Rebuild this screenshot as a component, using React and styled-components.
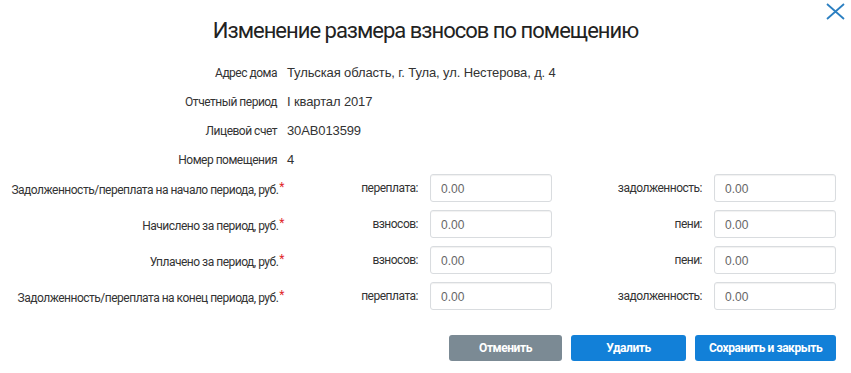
import React from "react";
import styled, { createGlobalStyle } from "styled-components";

const GlobalStyle = createGlobalStyle`
  html, body {
    margin: 0;
    padding: 0;
    background: #ffffff;
  }
  body {
    font-family: Roboto, "Liberation Sans", sans-serif;
    color: #333;
  }
`;

const Dialog = styled.div`
  position: relative;
  width: 851px;
  height: 373px;
  box-sizing: border-box;
  background: #fff;
`;

const CloseButton = styled.button`
  position: absolute;
  top: 1px;
  right: 5px;
  width: 22px;
  height: 20px;
  padding: 0;
  border: none;
  background: transparent;
  cursor: pointer;
  display: flex;
  align-items: center;
  justify-content: center;
`;

const Title = styled.h1`
  margin: 0;
  padding-top: 18px;
  height: 40px;
  font-family: Roboto, "Liberation Sans", sans-serif;
  font-weight: 400;
  font-size: 22px;
  line-height: 26px;
  letter-spacing: -1px;
  text-align: center;
  color: #222;
`;

const InfoGrid = styled.div`
  display: grid;
  grid-template-columns: 277px 1fr;
  column-gap: 10px;
  grid-auto-rows: 29px;
  align-items: center;
`;

const Label = styled.div`
  font-family: Roboto, "Liberation Sans", sans-serif;
  font-size: 12px;
  letter-spacing: -0.5px;
  color: #333;
  text-align: right;
  white-space: nowrap;
`;

const Value = styled.div`
  font-family: "Liberation Sans", Arial, sans-serif;
  font-size: 13px;
  letter-spacing: -0.12px;
  color: #333;
  white-space: nowrap;
`;

const FieldGrid = styled.div`
  display: grid;
  grid-template-columns: 284px 122px 122px 138px 122px;
  column-gap: 12px;
  grid-auto-rows: 28px;
  row-gap: 8px;
  align-items: center;
`;

const Required = styled.span`
  color: #e0262b;
  margin-left: 1px;
  vertical-align: 3px;
  font-size: 12px;
`;

const NumberInput = styled.input`
  box-sizing: border-box;
  width: 122px;
  height: 28px;
  padding: 2px 10px 0;
  border: 1px solid #d9dcdf;
  border-radius: 3px;
  box-shadow: inset 0 1px 1px rgba(0, 0, 0, 0.06);
  font-family: "Liberation Sans", Arial, sans-serif;
  font-size: 12px;
  color: #666;
  background: #fff;
  outline: none;
`;

const Footer = styled.div`
  display: flex;
  justify-content: flex-end;
  gap: 9px;
  padding: 25px 15px 0 0;
`;

const Button = styled.button`
  height: 26px;
  width: ${(p) => p.$width}px;
  border: none;
  border-radius: 3px;
  background: ${(p) => (p.$muted ? "#7b8a94" : "#1280d8")};
  color: #fff;
  font-family: Roboto, "Liberation Sans", sans-serif;
  font-weight: 700;
  font-size: 12px;
  letter-spacing: -0.45px;
  cursor: pointer;
`;

const info = [
  ["Адрес дома", "Тульская область, г. Тула, ул. Нестерова, д. 4"],
  ["Отчетный период", "I квартал 2017"],
  ["Лицевой счет", "30АВ013599"],
  ["Номер помещения", "4"],
];

const fields = [
  ["Задолженность/переплата на начало периода, руб.", "переплата:", "задолженность:"],
  ["Начислено за период, руб.", "взносов:", "пени:"],
  ["Уплачено за период, руб.", "взносов:", "пени:"],
  ["Задолженность/переплата на конец периода, руб.", "переплата:", "задолженность:"],
];

export default function App() {
  return (
    <>
      <GlobalStyle />
      <Dialog>
        <CloseButton aria-label="Закрыть">
          <svg width="19" height="17" viewBox="0 0 19 17">
            <path d="M1 1 L18 16 M18 1 L1 16" stroke="#2b7fc1" strokeWidth="1.8" fill="none" />
          </svg>
        </CloseButton>
        <Title>Изменение размера взносов по помещению</Title>

        <InfoGrid>
          {info.map(([label, value]) => (
            <React.Fragment key={label}>
              <Label>{label}</Label>
              <Value>{value}</Value>
            </React.Fragment>
          ))}
        </InfoGrid>

        <FieldGrid>
          {fields.map(([label, a, b], i) => (
            <React.Fragment key={i}>
              <Label>
                {label}
                <Required>*</Required>
              </Label>
              <Label>{a}</Label>
              <NumberInput defaultValue="0.00" />
              <Label>{b}</Label>
              <NumberInput defaultValue="0.00" />
            </React.Fragment>
          ))}
        </FieldGrid>

        <Footer>
          <Button $muted $width={113}>Отменить</Button>
          <Button $width={115}>Удалить</Button>
          <Button $width={141}>Сохранить и закрыть</Button>
        </Footer>
      </Dialog>
    </>
  );
}
